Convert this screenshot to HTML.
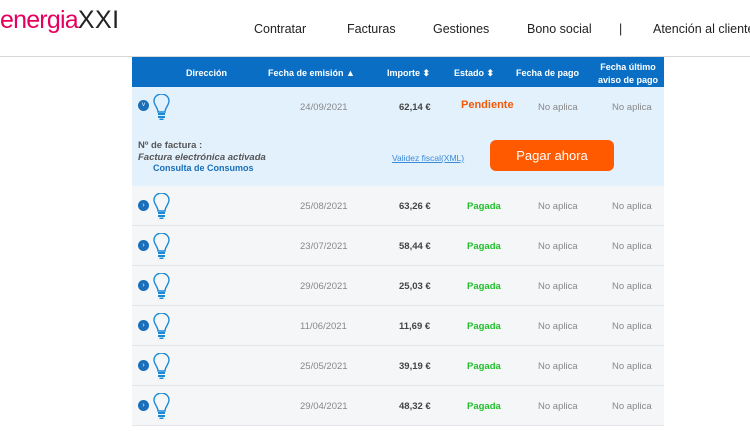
<!DOCTYPE html>
<html><head><meta charset="utf-8"><style>
*{margin:0;padding:0;box-sizing:border-box}
body{width:750px;height:433px;overflow:hidden;background:#fff;font-family:"Liberation Sans",sans-serif;position:relative}
.a{position:absolute;white-space:nowrap}
.nav{top:22px;font-size:12.5px;color:#222}
.hd{color:#fff;font-weight:bold;font-size:9px;text-align:center}
.row{position:absolute;left:132px;width:532px;height:40px;background:#f5f6f8;border-bottom:1px solid #e2e6ea}
.imp{color:#444;font-weight:bold}
.pg{color:#22c02a;font-weight:bold}
</style></head><body>
<div class="a" style="left:0;top:6px;font-size:25px;color:#e5005f;letter-spacing:-0.8px">energia<span style="color:#222;letter-spacing:0.5px">XXI</span></div>
<div class="a nav" style="left:254px">Contratar</div>
<div class="a nav" style="left:347px">Facturas</div>
<div class="a nav" style="left:433px">Gestiones</div>
<div class="a nav" style="left:527px">Bono social</div>
<div class="a nav" style="left:619px">|</div>
<div class="a nav" style="left:653px">Atención al cliente</div>
<div class="a" style="left:0;top:56px;width:750px;height:1px;background:#d8d8d8"></div>

<div class="a" style="left:132px;top:57px;width:532px;height:30px;background:#0a6fc4"></div>
<div class="a hd" style="left:186px;top:68px">Dirección</div>
<div class="a hd" style="left:268px;top:68px">Fecha de emisión ▲</div>
<div class="a hd" style="left:387px;top:68px">Importe ⬍</div>
<div class="a hd" style="left:454px;top:68px">Estado ⬍</div>
<div class="a hd" style="left:516px;top:68px">Fecha de pago</div>
<div class="a hd" style="left:598px;top:61px;line-height:13px">Fecha último<br>aviso de pago</div>

<div class="a" style="left:132px;top:87px;width:532px;height:99px;background:#e3f1fd"></div>
<div class="a" style="left:138px;top:100px;width:11px;height:11px;border-radius:50%;background:#1a6fb8;color:#fff;font-size:7px;line-height:11px;text-align:center">˅</div>
<svg class="a" style="left:153px;top:94px" width="17" height="27" viewBox="0 0 17 27"><path d="M5 18 C5 14 1 11 1 7 A7.5 7 0 0 1 16 7 C16 11 12 14 12 18 Z" fill="none" stroke="#1a8ad8" stroke-width="1.4"/><rect x="5" y="19" width="7" height="2" fill="#1a8ad8"/><rect x="5" y="22" width="7" height="2" fill="#1a8ad8"/><rect x="6.5" y="24.5" width="4" height="1.5" fill="#1a8ad8"/></svg>
<div class="a" style="left:300px;top:102px;font-size:9.5px;color:#888">24/09/2021</div>
<div class="a imp" style="left:399px;top:102px;font-size:9.5px">62,14 €</div>
<div class="a" style="left:461px;top:99px;font-size:11px;color:#f05a0a;font-weight:bold">Pendiente</div>
<div class="a" style="left:538px;top:102px;font-size:9.5px;color:#888">No aplica</div>
<div class="a" style="left:612px;top:102px;font-size:9.5px;color:#888">No aplica</div>
<div class="a" style="left:138px;top:140px;font-size:9.5px;color:#555;font-weight:bold">Nº de factura :</div>
<div class="a" style="left:138px;top:152px;font-size:9.5px;color:#555;font-weight:bold;font-style:italic">Factura electrónica activada</div>
<div class="a" style="left:153px;top:163px;font-size:9px;color:#1a6fb8;font-weight:bold">Consulta de Consumos</div>
<div class="a" style="left:392px;top:153px;font-size:8.5px;color:#3a8ad8;text-decoration:underline">Validez fiscal(XML)</div>
<div class="a" style="left:490px;top:140px;width:124px;height:31px;background:#ff5a00;border-radius:6px;color:#fff;font-size:13px;text-align:center;line-height:31px">Pagar ahora</div>

<div class="row" style="top:186px"></div>
<div class="row" style="top:226px"></div>
<div class="row" style="top:266px"></div>
<div class="row" style="top:306px"></div>
<div class="row" style="top:346px"></div>
<div class="row" style="top:386px"></div>
<div id="rows"></div>
<script>
var d=[["25/08/2021","63,26 €"],["23/07/2021","58,44 €"],["29/06/2021","25,03 €"],["11/06/2021","11,69 €"],["25/05/2021","39,19 €"],["29/04/2021","48,32 €"]];
var h="";
d.forEach(function(r,i){var t=186+i*40;
h+='<div class="a" style="left:138px;top:'+(t+14)+'px;width:11px;height:11px;border-radius:50%;background:#1a6fb8;color:#fff;font-size:7px;line-height:11px;text-align:center">›</div>';
h+='<svg class="a" style="left:153px;top:'+(t+7)+'px" width="17" height="27" viewBox="0 0 17 27"><path d="M5 18 C5 14 1 11 1 7 A7.5 7 0 0 1 16 7 C16 11 12 14 12 18 Z" fill="none" stroke="#1a8ad8" stroke-width="1.4"/><rect x="5" y="19" width="7" height="2" fill="#1a8ad8"/><rect x="5" y="22" width="7" height="2" fill="#1a8ad8"/><rect x="6.5" y="24.5" width="4" height="1.5" fill="#1a8ad8"/></svg>';
h+='<div class="a" style="left:300px;top:'+(t+15)+'px;font-size:9.5px;color:#888">'+r[0]+'</div>';
h+='<div class="a imp" style="left:399px;top:'+(t+15)+'px;font-size:9.5px">'+r[1]+'</div>';
h+='<div class="a pg" style="left:467px;top:'+(t+15)+'px;font-size:9.5px">Pagada</div>';
h+='<div class="a" style="left:538px;top:'+(t+15)+'px;font-size:9.5px;color:#888">No aplica</div>';
h+='<div class="a" style="left:612px;top:'+(t+15)+'px;font-size:9.5px;color:#888">No aplica</div>';});
document.getElementById("rows").innerHTML=h;
</script>
</body></html>
